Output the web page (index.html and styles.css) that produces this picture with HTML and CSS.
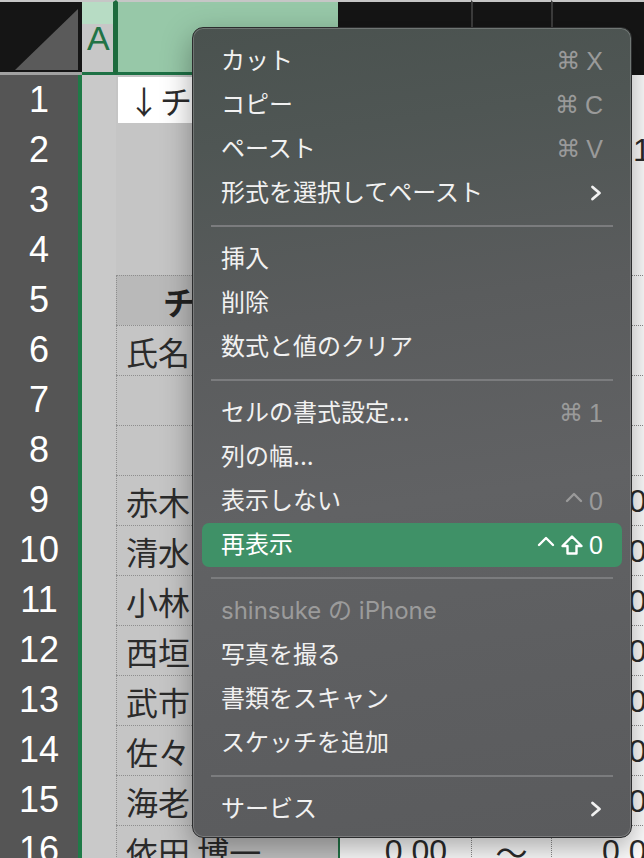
FILE: index.html
```html
<!DOCTYPE html>
<html lang="ja">
<head>
<meta charset="utf-8">
<title>Excel context menu</title>
<link rel="stylesheet" href="styles.css">
</head>
<body>
<div class="sheet">
  <div class="hcell corner"><svg class="tri" width="82" height="70" viewBox="0 0 82 70"><polygon points="15,68 78,68 78,7" fill="#5a5a5a"/></svg></div>
  <div class="hcell hA">A</div>
  <div class="hcell hB">B</div>
  <div class="hcell hX">F</div>
  <div class="hcell hX sepl">G</div>
  <div class="hcell hX sepl">H</div>

  <div class="rh">1</div><div class="ca"></div><div class="cb b1"><span class="active">↓チーム</span></div><div class="cf"></div><div class="cg"></div><div class="ch"></div>
  <div class="rh">2</div><div class="ca"></div><div class="cb"></div><div class="cf"></div><div class="cg"></div><div class="ch far">1</div>
  <div class="rh">3</div><div class="ca"></div><div class="cb"></div><div class="cf"></div><div class="cg"></div><div class="ch"></div>
  <div class="rh">4</div><div class="ca"></div><div class="cb"></div><div class="cf"></div><div class="cg"></div><div class="ch"></div>
  <div class="rh">5</div><div class="ca"></div><div class="cb t head"><b>チーム</b></div><div class="cf t"></div><div class="cg t"></div><div class="ch t"></div>
  <div class="rh">6</div><div class="ca"></div><div class="cb t">氏名</div><div class="cf t"></div><div class="cg t"></div><div class="ch t"></div>
  <div class="rh">7</div><div class="ca"></div><div class="cb t"></div><div class="cf t"></div><div class="cg t"></div><div class="ch t"></div>
  <div class="rh">8</div><div class="ca"></div><div class="cb t"></div><div class="cf t"></div><div class="cg t"></div><div class="ch t"></div>
  <div class="rh">9</div><div class="ca"></div><div class="cb t">赤木</div><div class="cf t num">0.00</div><div class="cg t tilde">〜</div><div class="ch t num">0.00</div>
  <div class="rh">10</div><div class="ca"></div><div class="cb t">清水</div><div class="cf t num">0.00</div><div class="cg t tilde">〜</div><div class="ch t num">0.00</div>
  <div class="rh">11</div><div class="ca"></div><div class="cb t">小林</div><div class="cf t num">0.00</div><div class="cg t tilde">〜</div><div class="ch t num">0.00</div>
  <div class="rh">12</div><div class="ca"></div><div class="cb t">西垣</div><div class="cf t num">0.00</div><div class="cg t tilde">〜</div><div class="ch t num">0.00</div>
  <div class="rh">13</div><div class="ca"></div><div class="cb t">武市</div><div class="cf t num">0.00</div><div class="cg t tilde">〜</div><div class="ch t num">0.00</div>
  <div class="rh">14</div><div class="ca"></div><div class="cb t">佐々</div><div class="cf t num">0.00</div><div class="cg t tilde">〜</div><div class="ch t num">0.00</div>
  <div class="rh">15</div><div class="ca"></div><div class="cb t">海老</div><div class="cf t num">0.00</div><div class="cg t tilde">〜</div><div class="ch t num">0.00</div>
  <div class="rh">16</div><div class="ca"></div><div class="cb t">依田 博一</div><div class="cf t num">0.00</div><div class="cg t tilde">〜</div><div class="ch t num">0.00</div>
</div>

<div class="menu">
  <div class="item"><span>カット</span><span class="key"><span class="cmd">⌘</span>X</span></div>
  <div class="item"><span>コピー</span><span class="key"><span class="cmd">⌘</span>C</span></div>
  <div class="item"><span>ペースト</span><span class="key"><span class="cmd">⌘</span>V</span></div>
  <div class="item"><span>形式を選択してペースト</span><svg class="chev" width="12" height="16" viewBox="0 0 12 16"><path d="M2.5 2 L9.5 8 L2.5 14" fill="none" stroke="#f1f1f1" stroke-width="2.8" stroke-linecap="round" stroke-linejoin="round"/></svg></div>
  <div class="sep"></div>
  <div class="item"><span>挿入</span></div>
  <div class="item"><span>削除</span></div>
  <div class="item"><span>数式と値のクリア</span></div>
  <div class="sep"></div>
  <div class="item"><span>セルの書式設定...</span><span class="key"><span class="cmd">⌘</span>1</span></div>
  <div class="item"><span>列の幅...</span></div>
  <div class="item"><span>表示しない</span><span class="key"><svg width="18" height="22" viewBox="0 0 18 22"><path d="M2 11 L9 4 L16 11" fill="none" stroke="#9a9a9a" stroke-width="2.4" stroke-linecap="round" stroke-linejoin="round"/></svg>0</span></div>
  <div class="item on"><span>再表示</span><span class="key"><svg width="18" height="22" viewBox="0 0 18 22"><path d="M2 11 L9 4 L16 11" fill="none" stroke="#ffffff" stroke-width="2.4" stroke-linecap="round" stroke-linejoin="round"/></svg><svg width="22" height="22" viewBox="0 0 22 22"><path d="M11 2.5 L20.5 12 H15.5 V19.5 H6.5 V12 H1.5 Z" fill="none" stroke="#ffffff" stroke-width="2.4" stroke-linejoin="round"/></svg>0</span></div>
  <div class="sep"></div>
  <div class="item dis"><span>shinsuke の iPhone</span></div>
  <div class="item"><span>写真を撮る</span></div>
  <div class="item"><span>書類をスキャン</span></div>
  <div class="item"><span>スケッチを追加</span></div>
  <div class="sep"></div>
  <div class="item"><span>サービス</span><svg class="chev" width="12" height="16" viewBox="0 0 12 16"><path d="M2.5 2 L9.5 8 L2.5 14" fill="none" stroke="#f1f1f1" stroke-width="2.8" stroke-linecap="round" stroke-linejoin="round"/></svg></div>
</div>
</body>
</html>
```

FILE: styles.css
```css
* { box-sizing: border-box; margin: 0; padding: 0; }

html, body {
  width: 644px;
  height: 858px;
  overflow: hidden;
  background: #ffffff;
}

body {
  position: relative;
  font-family: "Liberation Sans", "Noto Sans CJK JP", sans-serif;
}

.sheet {
  display: grid;
  grid-template-columns: 82px 34px 222px 133px 80px 120px;
  grid-template-rows: 75px repeat(16, 50px);
  width: 671px;
}

/* column headers */
.hcell {
  display: flex;
  align-items: center;
  justify-content: center;
  font-size: 32px;
  line-height: 1;
  color: #ffffff;
  background: #151515;
  border-top: 2px solid #c6c6c6;
  border-bottom: 3px solid #151515;
}

.corner {
  display: block;
  border-bottom-color: #a2a2a2;
}

.tri { display: block; }

.hA {
  justify-content: flex-start;
  padding-left: 5px;
  padding-top: 2px;
  font-size: 34px;
  color: #217346;
  background: linear-gradient(#b7dcc4 0 22px, #c7c7c7 22px);
  border-bottom-color: #1e7145;
  border-right: 3px solid #1d6b3d;
}

.hB {
  color: #1d6b3d;
  background: #97c8a8;
  border-bottom-color: #1e7145;
  border-left: 2px solid #1d6b3d;
  padding-top: 4px;
}

.hX { padding-top: 4px; }
.sepl { border-left: 2px solid #3c3c3c; }

/* rows */
.rh {
  display: flex;
  align-items: center;
  justify-content: center;
  background: #555555;
  color: #ffffff;
  font-size: 36px;
  line-height: 1;
  border-right: 4px solid #1f7a47;
}

.ca { background: #c9c9c9; }

.cb {
  display: flex;
  align-items: center;
  padding-left: 9px;
  background: #c5c5c5;
  color: #2b2b2b;
  font-family: "Noto Sans CJK JP", sans-serif;
  font-size: 32px;
  line-height: 1;
  white-space: nowrap;
  overflow: hidden;
}

.b1 {
  padding: 2px 0 2px 2px;
  align-items: stretch;
}

.active {
  flex: 1;
  display: flex;
  align-items: center;
  padding-left: 10px;
  background: #ffffff;
}

.head {
  background: #b9b9b9;
  padding-left: 46px;
}

.head b { font-weight: 700; color: #222; }

.cf, .cg, .ch {
  display: flex;
  align-items: center;
  background: #ffffff;
  color: #2b2b2b;
  font-size: 32px;
  line-height: 1;
  white-space: nowrap;
  overflow: hidden;
}

.cf { border-left: 2px solid #217346; }

.t { border-top: 1px dotted #8e8e8e; }
.cb.t, .cg.t, .ch.t { border-left: 1px dotted #8e8e8e; }

.cf.num { justify-content: flex-end; padding-right: 24px; }
.tilde { justify-content: center; font-family: "Noto Sans CJK JP", sans-serif; }
.ch.num { padding-left: 50px; }
.far { padding-left: 82px; }

/* context menu */
.menu {
  position: absolute;
  left: 192px;
  top: 27px;
  width: 440px;
  height: 811px;
  padding: 11px 9px 0;
  border-radius: 11px;
  border: 1px solid #2c2d2e;
  background: linear-gradient(172deg, #4a524f 0%, #4f5654 14%, #5a5c5d 35%, #616264 58%, #5d5e60 80%, #5a5b5d 100%);
  box-shadow: inset 0 0 0 1px rgba(255, 255, 255, 0.2), 0 10px 30px rgba(0, 0, 0, 0.35);
  font-family: "Inter", "Noto Sans CJK JP", sans-serif;
  font-size: 24px;
  line-height: 1;
  color: #f1f1f1;
}

.item {
  height: 44px;
  display: flex;
  align-items: center;
  justify-content: space-between;
  padding: 0 19px;
  border-radius: 7px;
  white-space: nowrap;
}

.item.on {
  background: #3f9167;
  color: #ffffff;
}

.item.dis { color: #9b9b9b; }

.sep {
  height: 22px;
  display: flex;
  align-items: center;
  padding: 0 9px;
}

.sep::before {
  content: "";
  flex: 1;
  height: 2px;
  background: #7b7c7e;
}

.key {
  display: flex;
  align-items: center;
  gap: 6px;
  color: #9a9a9a;
  font-family: "Liberation Sans", "DejaVu Sans", sans-serif;
  font-size: 25px;
}

.item.on .key { color: #ffffff; }

.cmd {
  font-family: "DejaVu Sans", sans-serif;
  font-size: 24px;
}

.chev { display: block; margin-right: 1px; }
```
